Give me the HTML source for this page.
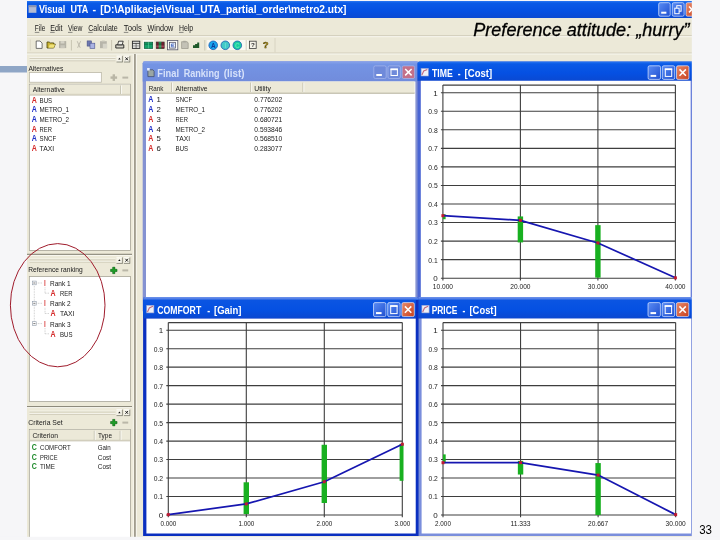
<!DOCTYPE html>
<html><head><meta charset="utf-8"><title>Visual UTA</title>
<style>
html,body{margin:0;padding:0;background:#f6f6f8;overflow:hidden}
svg{display:block;font-family:"Liberation Sans",sans-serif;filter:blur(0.35px)}
text{white-space:pre}
</style></head><body>
<svg width="720" height="540" viewBox="0 0 720 540">
<defs>
<linearGradient id="gA" x1="0" y1="0" x2="0" y2="1"><stop offset="0" stop-color="#2a78f2"/><stop offset="0.12" stop-color="#0a5ae6"/><stop offset="0.6" stop-color="#0550e2"/><stop offset="1" stop-color="#0a49d2"/></linearGradient>
<linearGradient id="gA2" x1="0" y1="0" x2="0" y2="1"><stop offset="0" stop-color="#6f93ea"/><stop offset="0.09" stop-color="#4f7ce6"/><stop offset="0.15" stop-color="#0b55e2"/><stop offset="0.6" stop-color="#0550e2"/><stop offset="1" stop-color="#0a47d0"/></linearGradient>
<linearGradient id="gI" x1="0" y1="0" x2="0" y2="1"><stop offset="0" stop-color="#8aa4ea"/><stop offset="0.15" stop-color="#7494e4"/><stop offset="1" stop-color="#718cdc"/></linearGradient>
<linearGradient id="gB" x1="0" y1="0" x2="1" y2="1"><stop offset="0" stop-color="#5a8cf4"/><stop offset="1" stop-color="#1f4fd0"/></linearGradient>
<linearGradient id="gC" x1="0" y1="0" x2="1" y2="1"><stop offset="0" stop-color="#e88a6a"/><stop offset="1" stop-color="#c8401c"/></linearGradient>
</defs>
<rect x="0" y="0" width="720" height="540" fill="#f6f6f8" />
<rect x="0" y="66" width="27" height="6.5" fill="#8fa6c6" />
<rect x="27" y="1" width="665" height="536" fill="#ece9d8" />
<rect x="27" y="1" width="665" height="17" fill="url(#gA)" />
<rect x="28.6" y="5.4" width="7.8" height="7.4" fill="#b4bcd2" />
<rect x="28.6" y="5.4" width="7.8" height="1.8" fill="#8a93b0" />
<text y="13.4" font-size="10.5" fill="#fff" font-weight="bold" ><tspan x="39" textLength="26.2" lengthAdjust="spacingAndGlyphs">Visual</tspan> <tspan x="70.5" textLength="17.5" lengthAdjust="spacingAndGlyphs">UTA</tspan> <tspan x="92.6" textLength="3.6" lengthAdjust="spacingAndGlyphs">-</tspan> <tspan x="100.3" textLength="246.2" lengthAdjust="spacingAndGlyphs">[D:\Aplikacje\Visual_UTA_partial_order\metro2.utx]</tspan></text>
<rect x="658.7" y="2.7" width="11.5" height="13.5" rx="1.5" fill="url(#gB)" stroke="#dfe9ff" stroke-width="0.7"/>
<rect x="661.2" y="11.7" width="5.175" height="2" fill="#fff" />
<rect x="672.3" y="2.7" width="11.8" height="13.5" rx="1.5" fill="url(#gB)" stroke="#dfe9ff" stroke-width="0.7"/>
<rect x="676.8" y="5.7" width="4.3" height="5.5" fill="none" stroke="#fff" stroke-width="1"/>
<rect x="674.8" y="8.2" width="4.3" height="5.5" fill="#2a62e0" stroke="#fff" stroke-width="1"/>
<rect x="686" y="2.7" width="11.8" height="13.5" rx="1.5" fill="url(#gC)" stroke="#dfe9ff" stroke-width="0.7"/>
<path d="M689 6.55L694.8 12.35M694.8 6.55L689 12.35" stroke="#fff" stroke-width="1.5" fill="none"/>
<rect x="691.8" y="0" width="28.2" height="20" fill="#f6f6f8" />
<text x="34.8" y="31.1" font-size="8.2" fill="#1a1a1a" font-weight="normal" font-style="normal" text-anchor="start" textLength="10.5" lengthAdjust="spacingAndGlyphs" >File</text>
<line x1="34.8" y1="32.4" x2="39.3" y2="32.4" stroke="#444" stroke-width="0.6" />
<text x="50.2" y="31.1" font-size="8.2" fill="#1a1a1a" font-weight="normal" font-style="normal" text-anchor="start" textLength="12.3" lengthAdjust="spacingAndGlyphs" >Edit</text>
<line x1="50.2" y1="32.4" x2="54.7" y2="32.4" stroke="#444" stroke-width="0.6" />
<text x="68" y="31.1" font-size="8.2" fill="#1a1a1a" font-weight="normal" font-style="normal" text-anchor="start" textLength="14.5" lengthAdjust="spacingAndGlyphs" >View</text>
<line x1="68" y1="32.4" x2="72.5" y2="32.4" stroke="#444" stroke-width="0.6" />
<text x="88.2" y="31.1" font-size="8.2" fill="#1a1a1a" font-weight="normal" font-style="normal" text-anchor="start" textLength="29.6" lengthAdjust="spacingAndGlyphs" >Calculate</text>
<line x1="88.2" y1="32.4" x2="92.7" y2="32.4" stroke="#444" stroke-width="0.6" />
<text x="123.8" y="31.1" font-size="8.2" fill="#1a1a1a" font-weight="normal" font-style="normal" text-anchor="start" textLength="18" lengthAdjust="spacingAndGlyphs" >Tools</text>
<line x1="123.8" y1="32.4" x2="128.3" y2="32.4" stroke="#444" stroke-width="0.6" />
<text x="147.5" y="31.1" font-size="8.2" fill="#1a1a1a" font-weight="normal" font-style="normal" text-anchor="start" textLength="25.8" lengthAdjust="spacingAndGlyphs" >Window</text>
<line x1="147.5" y1="32.4" x2="152" y2="32.4" stroke="#444" stroke-width="0.6" />
<text x="179" y="31.1" font-size="8.2" fill="#1a1a1a" font-weight="normal" font-style="normal" text-anchor="start" textLength="14.2" lengthAdjust="spacingAndGlyphs" >Help</text>
<line x1="179" y1="32.4" x2="183.5" y2="32.4" stroke="#444" stroke-width="0.6" />
<line x1="27" y1="35.8" x2="692" y2="35.8" stroke="#c8c4b0" stroke-width="0.9" />
<line x1="27" y1="36.7" x2="692" y2="36.7" stroke="#fbfaf4" stroke-width="0.9" />
<line x1="27" y1="53.1" x2="692" y2="53.1" stroke="#c8c4b0" stroke-width="0.9" />
<line x1="27" y1="54" x2="692" y2="54" stroke="#fbfaf4" stroke-width="0.9" />
<text x="473.2" y="35.9" font-size="18.8" fill="#000" font-weight="normal" font-style="italic" text-anchor="start" textLength="216.3" lengthAdjust="spacingAndGlyphs" stroke="#000" stroke-width="0.3">Preference attitude: „hurry”</text>
<line x1="30.3" y1="39.5" x2="30.3" y2="50.5" stroke="#dcd8c6" stroke-width="1" />
<path d="M36.2 41h3.8l2.1 2.1v5.3h-5.9z" fill="#fff" stroke="#3a3a3a" stroke-width="0.7"/>
<path d="M47 48v-6h2.2l0.9 0.9h3.6v1.2h1.6l-1.6 3.9z" fill="#c9b230" stroke="#4a4208" stroke-width="0.8"/>
<path d="M48.4 47.8l1.3-3.2h5.4l-1.4 3.2z" fill="#efe27a"/>
<rect x="59" y="41.1" width="7.2" height="7" fill="#b4b2a6" />
<rect x="60.6" y="41.1" width="3.8" height="2.4" fill="#d6d4c8" />
<rect x="60.4" y="45.2" width="4.4" height="2.9" fill="#c9c7bb" />
<line x1="71.4" y1="40" x2="71.4" y2="50.5" stroke="#c9c5b2" stroke-width="1" />
<path d="M77.2 41.2l3 6.6M80.6 41.2l-3 6.6" stroke="#b9b6a8" stroke-width="0.9" fill="none"/>
<rect x="87.1" y="40.9" width="4.4" height="5.2" fill="#6d78b0" stroke="#3d467c" stroke-width="0.5"/>
<rect x="90" y="43.2" width="4.8" height="5.2" fill="#a9b2e2" stroke="#4a5390" stroke-width="0.6"/>
<rect x="100" y="41.2" width="6.8" height="7" fill="#b7b5aa" />
<rect x="102.8" y="43.7" width="4.4" height="4.6" fill="#d6d4c9" />
<rect x="101.8" y="40.6" width="3" height="1.4" fill="#c6c4b8" />
<line x1="111.6" y1="40" x2="111.6" y2="50.5" stroke="#c9c5b2" stroke-width="1" />
<path d="M115.8 44.8h8v3.2h-8z" fill="#d6d4c8" stroke="#1e1e1e" stroke-width="0.9"/>
<path d="M117.6 44.8l1-3.6h4.6l-1 3.6z" fill="#efefe8" stroke="#1e1e1e" stroke-width="0.8"/>
<line x1="128.5" y1="40" x2="128.5" y2="50.5" stroke="#c9c5b2" stroke-width="1" />
<rect x="132.4" y="41.2" width="7.4" height="7.2" fill="#e6e6e2" stroke="#2a2a2a" stroke-width="0.9"/>
<line x1="132.4" y1="43.4" x2="139.8" y2="43.4" stroke="#2a2a2a" stroke-width="0.8" />
<line x1="136.1" y1="43.4" x2="136.1" y2="48.4" stroke="#2a2a2a" stroke-width="0.6" />
<line x1="132.4" y1="45.9" x2="139.8" y2="45.9" stroke="#555" stroke-width="0.5" />
<rect x="142.9" y="40" width="11.2" height="10" fill="#fbfaf4" />
<rect x="144.3" y="42.2" width="8.4" height="6.2" fill="#12a06a" stroke="#0a5a3a" stroke-width="0.7"/>
<line x1="144.3" y1="44.2" x2="152.7" y2="44.2" stroke="#0a5a3a" stroke-width="0.6" />
<line x1="148.5" y1="42.2" x2="148.5" y2="48.4" stroke="#5fd0a0" stroke-width="0.6" />
<rect x="156.2" y="42" width="8" height="6.6" fill="#8a1c34" stroke="#2a2a2a" stroke-width="0.6"/>
<rect x="158.6" y="42" width="2.8" height="6.6" fill="#1f8f50" />
<line x1="156.2" y1="44" x2="164.2" y2="44" stroke="#2a2a2a" stroke-width="0.6" />
<line x1="156.2" y1="46.2" x2="164.2" y2="46.2" stroke="#c8b8c0" stroke-width="0.4" />
<rect x="167.4" y="40.5" width="10.4" height="9.3" fill="#fdfcf8" stroke="#55556a" stroke-width="0.8"/>
<rect x="169.6" y="42.3" width="6" height="5.8" fill="#f4f6fc" stroke="#44465a" stroke-width="0.7"/>
<path d="M174.4 44h-3v2.8h3M171.4 45.4h2.4" stroke="#2a50b8" stroke-width="0.7" fill="none"/>
<path d="M181.6 41.7h5.6l1 1.4v5.4h-6.6z" fill="#c4c2b6" stroke="#8d8b80" stroke-width="0.6"/>
<rect x="183.2" y="40.8" width="2.6" height="1.5" fill="#a9a79c" />
<path d="M193 47.9v-2.7h2.1v-1.3h2.1v-1.3h2v5.3z" fill="#1f5a2a"/>
<line x1="204.8" y1="40" x2="204.8" y2="50.5" stroke="#c9c5b2" stroke-width="1" />
<rect x="207.2" y="40" width="41.4" height="10" fill="#f9f8f1" />
<circle cx="213.2" cy="45.3" r="4.3" fill="#1aa6ee" stroke="#1a58b0" stroke-width="0.8"/>
<text x="213.2" y="47.6" font-size="6.4" fill="#0d3a98" font-weight="bold" font-style="normal" text-anchor="middle" >A</text>
<circle cx="225.3" cy="45.3" r="4.3" fill="#42c8c8" stroke="#1a58b0" stroke-width="0.8"/>
<text x="225.3" y="47.6" font-size="6.4" fill="#6adcd2" font-weight="bold" font-style="normal" text-anchor="middle" >I</text>
<circle cx="237.3" cy="45.3" r="4.3" fill="#18cea0" stroke="#1a58b0" stroke-width="0.8"/>
<text x="237.3" y="47.6" font-size="6.4" fill="#5ae2b8" font-weight="bold" font-style="normal" text-anchor="middle" >C</text>
<line x1="246.2" y1="40" x2="246.2" y2="50.5" stroke="#c9c5b2" stroke-width="0.8" />
<rect x="249.4" y="41.2" width="6.8" height="7.2" fill="#f6f4ea" stroke="#3c3c3c" stroke-width="0.8"/>
<text x="252.8" y="47.4" font-size="6.2" fill="#222" font-weight="bold" font-style="normal" text-anchor="middle" >?</text>
<text x="265.6" y="48.4" font-size="9.6" fill="#b89a18" font-weight="bold" font-style="normal" text-anchor="middle" stroke="#3a3000" stroke-width="0.35">?</text>
<line x1="275" y1="38" x2="275" y2="52.5" stroke="#d8d4c2" stroke-width="1" />
<line x1="133.4" y1="54" x2="133.4" y2="540" stroke="#f6f4ea" stroke-width="1.2" />
<rect x="134.2" y="54" width="1.6" height="486" fill="#8e8b7c" />
<line x1="136.3" y1="54" x2="136.3" y2="540" stroke="#fdfcf8" stroke-width="0.8" />
<line x1="29.5" y1="57.6" x2="115.5" y2="57.6" stroke="#fbfaf3" stroke-width="0.9" />
<line x1="29.5" y1="58.4" x2="115.5" y2="58.4" stroke="#c5c1ae" stroke-width="0.7" />
<line x1="29.5" y1="60" x2="115.5" y2="60" stroke="#fbfaf3" stroke-width="0.9" />
<line x1="29.5" y1="60.8" x2="115.5" y2="60.8" stroke="#c5c1ae" stroke-width="0.7" />
<rect x="116.5" y="55.9" width="5.8" height="6" fill="#f6f4ea" />
<line x1="116.5" y1="62" x2="122.5" y2="62" stroke="#7a786c" stroke-width="0.8" />
<line x1="122.4" y1="55.9" x2="122.4" y2="62.2" stroke="#7a786c" stroke-width="0.8" />
<line x1="116.5" y1="55.9" x2="122.3" y2="55.9" stroke="#fff" stroke-width="0.6" />
<rect x="123.9" y="55.9" width="5.8" height="6" fill="#f6f4ea" />
<line x1="123.9" y1="62" x2="129.9" y2="62" stroke="#7a786c" stroke-width="0.8" />
<line x1="129.8" y1="55.9" x2="129.8" y2="62.2" stroke="#7a786c" stroke-width="0.8" />
<line x1="123.9" y1="55.9" x2="129.7" y2="55.9" stroke="#fff" stroke-width="0.6" />
<path d="M118.2 59.6l1.2-1.8l1.2 1.8z" fill="#111"/>
<path d="M125.4 57.4l2.6 2.8M128 57.4l-2.6 2.8" stroke="#111" stroke-width="0.9"/>
<text x="28.4" y="70.7" font-size="7.9" fill="#1a1a1a" font-weight="normal" font-style="normal" text-anchor="start" textLength="35" lengthAdjust="spacingAndGlyphs" >Alternatives</text>
<rect x="29.5" y="72.6" width="71.8" height="9.6" fill="#fff" stroke="#b4b1a0" stroke-width="0.7"/>
<rect x="110.5" y="76.4" width="6.6" height="2.4" fill="#b9b6a6" />
<rect x="112.6" y="74.3" width="2.4" height="6.6" fill="#b9b6a6" />
<rect x="122.4" y="76.6" width="5.8" height="2" fill="#bab7a8" />
<rect x="29.3" y="84.2" width="101.1" height="166.2" fill="#fff" stroke="#9c9a8c" stroke-width="0.7"/>
<rect x="29.7" y="84.6" width="100.3" height="10.4" fill="#ece9d8" />
<line x1="29.7" y1="95" x2="130" y2="95" stroke="#bdb9a6" stroke-width="1" />
<line x1="29.7" y1="94.2" x2="130" y2="94.2" stroke="#d9d5c4" stroke-width="0.8" />
<line x1="120.5" y1="85.5" x2="120.5" y2="94" stroke="#b9b5a2" stroke-width="0.9" />
<line x1="121.3" y1="85.5" x2="121.3" y2="94" stroke="#fff" stroke-width="0.8" />
<text x="32.7" y="92.4" font-size="7.9" fill="#1a1a1a" font-weight="normal" font-style="normal" text-anchor="start" textLength="32" lengthAdjust="spacingAndGlyphs" >Alternative</text>
<text x="34.3" y="102.6" font-size="8.3" fill="#d42a2a" font-weight="bold" font-style="normal" text-anchor="middle" textLength="5.1" lengthAdjust="spacingAndGlyphs" >A</text>
<text x="39.6" y="102.6" font-size="7.8" fill="#1a1a1a" font-weight="normal" font-style="normal" text-anchor="start" textLength="12.5" lengthAdjust="spacingAndGlyphs" >BUS</text>
<text x="34.3" y="112.25" font-size="8.3" fill="#2030c8" font-weight="bold" font-style="normal" text-anchor="middle" textLength="5.1" lengthAdjust="spacingAndGlyphs" >A</text>
<text x="39.6" y="112.25" font-size="7.8" fill="#1a1a1a" font-weight="normal" font-style="normal" text-anchor="start" textLength="29.5" lengthAdjust="spacingAndGlyphs" >METRO_1</text>
<text x="34.3" y="121.9" font-size="8.3" fill="#2030c8" font-weight="bold" font-style="normal" text-anchor="middle" textLength="5.1" lengthAdjust="spacingAndGlyphs" >A</text>
<text x="39.6" y="121.9" font-size="7.8" fill="#1a1a1a" font-weight="normal" font-style="normal" text-anchor="start" textLength="29.5" lengthAdjust="spacingAndGlyphs" >METRO_2</text>
<text x="34.3" y="131.5" font-size="8.3" fill="#d42a2a" font-weight="bold" font-style="normal" text-anchor="middle" textLength="5.1" lengthAdjust="spacingAndGlyphs" >A</text>
<text x="39.6" y="131.5" font-size="7.8" fill="#1a1a1a" font-weight="normal" font-style="normal" text-anchor="start" textLength="12.3" lengthAdjust="spacingAndGlyphs" >RER</text>
<text x="34.3" y="141.15" font-size="8.3" fill="#2030c8" font-weight="bold" font-style="normal" text-anchor="middle" textLength="5.1" lengthAdjust="spacingAndGlyphs" >A</text>
<text x="39.6" y="141.15" font-size="7.8" fill="#1a1a1a" font-weight="normal" font-style="normal" text-anchor="start" textLength="16.5" lengthAdjust="spacingAndGlyphs" >SNCF</text>
<text x="34.3" y="150.8" font-size="8.3" fill="#d42a2a" font-weight="bold" font-style="normal" text-anchor="middle" textLength="5.1" lengthAdjust="spacingAndGlyphs" >A</text>
<text x="39.6" y="150.8" font-size="7.8" fill="#1a1a1a" font-weight="normal" font-style="normal" text-anchor="start" textLength="14.5" lengthAdjust="spacingAndGlyphs" >TAXI</text>
<line x1="27" y1="254.4" x2="132" y2="254.4" stroke="#8e8b7c" stroke-width="1.2" />
<line x1="27" y1="255.4" x2="132" y2="255.4" stroke="#fdfcf7" stroke-width="0.8" />
<line x1="29.5" y1="259" x2="115.5" y2="259" stroke="#fbfaf3" stroke-width="0.9" />
<line x1="29.5" y1="259.8" x2="115.5" y2="259.8" stroke="#c5c1ae" stroke-width="0.7" />
<line x1="29.5" y1="261.4" x2="115.5" y2="261.4" stroke="#fbfaf3" stroke-width="0.9" />
<line x1="29.5" y1="262.2" x2="115.5" y2="262.2" stroke="#c5c1ae" stroke-width="0.7" />
<rect x="116.5" y="257.3" width="5.8" height="6" fill="#f6f4ea" />
<line x1="116.5" y1="263.4" x2="122.5" y2="263.4" stroke="#7a786c" stroke-width="0.8" />
<line x1="122.4" y1="257.3" x2="122.4" y2="263.6" stroke="#7a786c" stroke-width="0.8" />
<line x1="116.5" y1="257.3" x2="122.3" y2="257.3" stroke="#fff" stroke-width="0.6" />
<rect x="123.9" y="257.3" width="5.8" height="6" fill="#f6f4ea" />
<line x1="123.9" y1="263.4" x2="129.9" y2="263.4" stroke="#7a786c" stroke-width="0.8" />
<line x1="129.8" y1="257.3" x2="129.8" y2="263.6" stroke="#7a786c" stroke-width="0.8" />
<line x1="123.9" y1="257.3" x2="129.7" y2="257.3" stroke="#fff" stroke-width="0.6" />
<path d="M118.2 261l1.2-1.8l1.2 1.8z" fill="#111"/>
<path d="M125.4 258.8l2.6 2.8M128 258.8l-2.6 2.8" stroke="#111" stroke-width="0.9"/>
<text x="28.2" y="272.2" font-size="7.9" fill="#1a1a1a" font-weight="normal" font-style="normal" text-anchor="start" textLength="54.5" lengthAdjust="spacingAndGlyphs" >Reference ranking</text>
<rect x="110.5" y="269.2" width="6.6" height="2.4" fill="#1f9e28" />
<rect x="112.6" y="267.1" width="2.4" height="6.6" fill="#1f9e28" />
<path d="M110.6 269.3h2.1v-2.1h2.2v2.1h2.1v2.2h-2.1v2.1h-2.2v-2.1h-2.1z" fill="none" stroke="#0d5c14" stroke-width="0.5"/>
<rect x="122.4" y="269.4" width="5.8" height="2" fill="#bab7a8" />
<rect x="29.3" y="276.6" width="101.1" height="125" fill="#fff" stroke="#9c9a8c" stroke-width="0.7"/>
<line x1="34.3" y1="286" x2="34.3" y2="323.6" stroke="#b5b5b5" stroke-width="0.7" stroke-dasharray="0.8 0.8"/>
<rect x="32.5" y="281.1" width="3.7" height="3.7" fill="#fff" stroke="#8f9aa8" stroke-width="0.6"/>
<line x1="33.3" y1="283" x2="35.4" y2="283" stroke="#222" stroke-width="0.6" />
<line x1="36.4" y1="283" x2="42" y2="283" stroke="#b5b5b5" stroke-width="0.7" stroke-dasharray="0.8 0.8"/>
<text x="45" y="286" font-size="8.2" fill="#d42a2a" font-weight="normal" font-style="normal" text-anchor="middle" >I</text>
<text x="50" y="286" font-size="7.9" fill="#1a1a1a" font-weight="normal" font-style="normal" text-anchor="start" textLength="20.6" lengthAdjust="spacingAndGlyphs" >Rank 1</text>
<line x1="45" y1="287.5" x2="45" y2="293.2" stroke="#b5b5b5" stroke-width="0.7" stroke-dasharray="0.8 0.8"/>
<line x1="45" y1="293.2" x2="49.5" y2="293.2" stroke="#b5b5b5" stroke-width="0.7" stroke-dasharray="0.8 0.8"/>
<text x="53" y="296.1" font-size="8.3" fill="#d42a2a" font-weight="bold" font-style="normal" text-anchor="middle" textLength="5.1" lengthAdjust="spacingAndGlyphs" >A</text>
<text x="60" y="296.1" font-size="7.8" fill="#1a1a1a" font-weight="normal" font-style="normal" text-anchor="start" textLength="12.5" lengthAdjust="spacingAndGlyphs" >RER</text>
<rect x="32.5" y="301.4" width="3.7" height="3.7" fill="#fff" stroke="#8f9aa8" stroke-width="0.6"/>
<line x1="33.3" y1="303.3" x2="35.4" y2="303.3" stroke="#222" stroke-width="0.6" />
<line x1="36.4" y1="303.3" x2="42" y2="303.3" stroke="#b5b5b5" stroke-width="0.7" stroke-dasharray="0.8 0.8"/>
<text x="45" y="306.3" font-size="8.2" fill="#d42a2a" font-weight="normal" font-style="normal" text-anchor="middle" >I</text>
<text x="50" y="306.3" font-size="7.9" fill="#1a1a1a" font-weight="normal" font-style="normal" text-anchor="start" textLength="20.6" lengthAdjust="spacingAndGlyphs" >Rank 2</text>
<line x1="45" y1="307.8" x2="45" y2="313.5" stroke="#b5b5b5" stroke-width="0.7" stroke-dasharray="0.8 0.8"/>
<line x1="45" y1="313.5" x2="49.5" y2="313.5" stroke="#b5b5b5" stroke-width="0.7" stroke-dasharray="0.8 0.8"/>
<text x="53" y="316.4" font-size="8.3" fill="#d42a2a" font-weight="bold" font-style="normal" text-anchor="middle" textLength="5.1" lengthAdjust="spacingAndGlyphs" >A</text>
<text x="60" y="316.4" font-size="7.8" fill="#1a1a1a" font-weight="normal" font-style="normal" text-anchor="start" textLength="14.5" lengthAdjust="spacingAndGlyphs" >TAXI</text>
<rect x="32.5" y="321.7" width="3.7" height="3.7" fill="#fff" stroke="#8f9aa8" stroke-width="0.6"/>
<line x1="33.3" y1="323.6" x2="35.4" y2="323.6" stroke="#222" stroke-width="0.6" />
<line x1="36.4" y1="323.6" x2="42" y2="323.6" stroke="#b5b5b5" stroke-width="0.7" stroke-dasharray="0.8 0.8"/>
<text x="45" y="326.6" font-size="8.2" fill="#d42a2a" font-weight="normal" font-style="normal" text-anchor="middle" >I</text>
<text x="50" y="326.6" font-size="7.9" fill="#1a1a1a" font-weight="normal" font-style="normal" text-anchor="start" textLength="20.6" lengthAdjust="spacingAndGlyphs" >Rank 3</text>
<line x1="45" y1="328.1" x2="45" y2="333.8" stroke="#b5b5b5" stroke-width="0.7" stroke-dasharray="0.8 0.8"/>
<line x1="45" y1="333.8" x2="49.5" y2="333.8" stroke="#b5b5b5" stroke-width="0.7" stroke-dasharray="0.8 0.8"/>
<text x="53" y="336.7" font-size="8.3" fill="#d42a2a" font-weight="bold" font-style="normal" text-anchor="middle" textLength="5.1" lengthAdjust="spacingAndGlyphs" >A</text>
<text x="60" y="336.7" font-size="7.8" fill="#1a1a1a" font-weight="normal" font-style="normal" text-anchor="start" textLength="12.5" lengthAdjust="spacingAndGlyphs" >BUS</text>
<ellipse cx="57.7" cy="305.2" rx="47.3" ry="61.6" fill="none" stroke="#a01c2c" stroke-width="1"/>
<line x1="27" y1="406.6" x2="132" y2="406.6" stroke="#8e8b7c" stroke-width="1.2" />
<line x1="27" y1="407.6" x2="132" y2="407.6" stroke="#fdfcf7" stroke-width="0.8" />
<line x1="29.5" y1="411.2" x2="115.5" y2="411.2" stroke="#fbfaf3" stroke-width="0.9" />
<line x1="29.5" y1="412" x2="115.5" y2="412" stroke="#c5c1ae" stroke-width="0.7" />
<line x1="29.5" y1="413.6" x2="115.5" y2="413.6" stroke="#fbfaf3" stroke-width="0.9" />
<line x1="29.5" y1="414.4" x2="115.5" y2="414.4" stroke="#c5c1ae" stroke-width="0.7" />
<rect x="116.5" y="409.5" width="5.8" height="6" fill="#f6f4ea" />
<line x1="116.5" y1="415.6" x2="122.5" y2="415.6" stroke="#7a786c" stroke-width="0.8" />
<line x1="122.4" y1="409.5" x2="122.4" y2="415.8" stroke="#7a786c" stroke-width="0.8" />
<line x1="116.5" y1="409.5" x2="122.3" y2="409.5" stroke="#fff" stroke-width="0.6" />
<rect x="123.9" y="409.5" width="5.8" height="6" fill="#f6f4ea" />
<line x1="123.9" y1="415.6" x2="129.9" y2="415.6" stroke="#7a786c" stroke-width="0.8" />
<line x1="129.8" y1="409.5" x2="129.8" y2="415.8" stroke="#7a786c" stroke-width="0.8" />
<line x1="123.9" y1="409.5" x2="129.7" y2="409.5" stroke="#fff" stroke-width="0.6" />
<path d="M118.2 413.2l1.2-1.8l1.2 1.8z" fill="#111"/>
<path d="M125.4 411l2.6 2.8M128 411l-2.6 2.8" stroke="#111" stroke-width="0.9"/>
<text x="28.3" y="425.3" font-size="7.9" fill="#1a1a1a" font-weight="normal" font-style="normal" text-anchor="start" textLength="34.4" lengthAdjust="spacingAndGlyphs" >Criteria Set</text>
<rect x="110.5" y="421.4" width="6.6" height="2.4" fill="#1f9e28" />
<rect x="112.6" y="419.3" width="2.4" height="6.6" fill="#1f9e28" />
<path d="M110.6 421.5h2.1v-2.1h2.2v2.1h2.1v2.2h-2.1v2.1h-2.2v-2.1h-2.1z" fill="none" stroke="#0d5c14" stroke-width="0.5"/>
<rect x="122.4" y="421.6" width="5.8" height="2" fill="#bab7a8" />
<rect x="29.3" y="429.4" width="101.1" height="112" fill="#fff" stroke="#9c9a8c" stroke-width="0.7"/>
<rect x="29.7" y="429.8" width="100.3" height="10.8" fill="#ece9d8" />
<line x1="29.7" y1="440.8" x2="130" y2="440.8" stroke="#bdb9a6" stroke-width="1" />
<line x1="29.7" y1="440" x2="130" y2="440" stroke="#d9d5c4" stroke-width="0.8" />
<line x1="94.3" y1="430.8" x2="94.3" y2="440" stroke="#b9b5a2" stroke-width="0.9" />
<line x1="95.1" y1="430.8" x2="95.1" y2="440" stroke="#fff" stroke-width="0.8" />
<line x1="120.2" y1="430.8" x2="120.2" y2="440" stroke="#b9b5a2" stroke-width="0.9" />
<line x1="121" y1="430.8" x2="121" y2="440" stroke="#fff" stroke-width="0.8" />
<text x="32.4" y="438.4" font-size="7.9" fill="#1a1a1a" font-weight="normal" font-style="normal" text-anchor="start" textLength="25.6" lengthAdjust="spacingAndGlyphs" >Criterion</text>
<text x="98" y="438.4" font-size="7.9" fill="#1a1a1a" font-weight="normal" font-style="normal" text-anchor="start" textLength="14" lengthAdjust="spacingAndGlyphs" >Type</text>
<text x="34.4" y="449.9" font-size="8.3" fill="#1d8a2a" font-weight="bold" font-style="normal" text-anchor="middle" textLength="5.1" lengthAdjust="spacingAndGlyphs" >C</text>
<text x="40" y="449.9" font-size="7.8" fill="#1a1a1a" font-weight="normal" font-style="normal" text-anchor="start" textLength="30.6" lengthAdjust="spacingAndGlyphs" >COMFORT</text>
<text x="97.8" y="449.9" font-size="7.8" fill="#1a1a1a" font-weight="normal" font-style="normal" text-anchor="start" textLength="13" lengthAdjust="spacingAndGlyphs" >Gain</text>
<text x="34.4" y="459.5" font-size="8.3" fill="#1d8a2a" font-weight="bold" font-style="normal" text-anchor="middle" textLength="5.1" lengthAdjust="spacingAndGlyphs" >C</text>
<text x="40" y="459.5" font-size="7.8" fill="#1a1a1a" font-weight="normal" font-style="normal" text-anchor="start" textLength="17.6" lengthAdjust="spacingAndGlyphs" >PRICE</text>
<text x="97.8" y="459.5" font-size="7.8" fill="#1a1a1a" font-weight="normal" font-style="normal" text-anchor="start" textLength="13.2" lengthAdjust="spacingAndGlyphs" >Cost</text>
<text x="34.4" y="469.1" font-size="8.3" fill="#1d8a2a" font-weight="bold" font-style="normal" text-anchor="middle" textLength="5.1" lengthAdjust="spacingAndGlyphs" >C</text>
<text x="40" y="469.1" font-size="7.8" fill="#1a1a1a" font-weight="normal" font-style="normal" text-anchor="start" textLength="15" lengthAdjust="spacingAndGlyphs" >TIME</text>
<text x="97.8" y="469.1" font-size="7.8" fill="#1a1a1a" font-weight="normal" font-style="normal" text-anchor="start" textLength="13.2" lengthAdjust="spacingAndGlyphs" >Cost</text>
<path d="M142.7 311.3V63.3q0-2 2-2H416.7q2 0 2 2V311.3z" fill="#8492d2"/>
<path d="M142.7 81.5V63.3q0-2 2-2H416.7q2 0 2 2V81.5z" fill="url(#gI)"/>
<rect x="146" y="81.5" width="269.4" height="227.3" fill="#fff" />
<rect x="402.2" y="65.9" width="12.4" height="12.6" rx="1.5" fill="#c4708a" stroke="#a9b9ec" stroke-width="0.7"/>
<path d="M405.2 69L411.6 75.4M411.6 69L405.2 75.4" stroke="#fff" stroke-width="1.5" fill="none"/>
<rect x="388" y="65.9" width="12.4" height="12.6" rx="1.5" fill="#6f8ada" stroke="#a9b9ec" stroke-width="0.7"/>
<rect x="391" y="69.1" width="6.4" height="6.4" fill="none" stroke="#fff" stroke-width="1"/>
<rect x="390.5" y="68.6" width="7.4" height="1.6" fill="#fff" />
<rect x="373.8" y="65.9" width="12.4" height="12.6" rx="1.5" fill="#6f8ada" stroke="#a9b9ec" stroke-width="0.7"/>
<rect x="376.3" y="74" width="5.58" height="2" fill="#fff" />
<path d="M147.9 69.8h5l1.2 1.4v5.4h-6.2z" fill="#9aa6a4" stroke="#3a4668" stroke-width="0.7"/>
<rect x="147.1" y="68" width="2.6" height="2.6" fill="#e4ecff" />
<text y="76.6" font-size="10.4" fill="#d6e1fa" font-weight="bold" ><tspan x="157.3" textLength="21.7" lengthAdjust="spacingAndGlyphs">Final</tspan> <tspan x="183.7" textLength="35.8" lengthAdjust="spacingAndGlyphs">Ranking</tspan> <tspan x="223.7" textLength="20.8" lengthAdjust="spacingAndGlyphs">(list)</tspan></text>
<rect x="146" y="81.5" width="268.6" height="11.7" fill="#ece9d8" />
<line x1="146" y1="93.3" x2="414.6" y2="93.3" stroke="#bdb9a6" stroke-width="1" />
<line x1="146" y1="92.5" x2="414.6" y2="92.5" stroke="#d9d5c4" stroke-width="0.8" />
<line x1="171.6" y1="82.6" x2="171.6" y2="92" stroke="#b9b5a2" stroke-width="0.9" />
<line x1="172.4" y1="82.6" x2="172.4" y2="92" stroke="#fff" stroke-width="0.8" />
<line x1="250.8" y1="82.6" x2="250.8" y2="92" stroke="#b9b5a2" stroke-width="0.9" />
<line x1="251.6" y1="82.6" x2="251.6" y2="92" stroke="#fff" stroke-width="0.8" />
<line x1="303" y1="82.6" x2="303" y2="92" stroke="#b9b5a2" stroke-width="0.9" />
<line x1="303.8" y1="82.6" x2="303.8" y2="92" stroke="#fff" stroke-width="0.8" />
<text x="148.8" y="90.6" font-size="7.9" fill="#1a1a1a" font-weight="normal" font-style="normal" text-anchor="start" textLength="14.6" lengthAdjust="spacingAndGlyphs" >Rank</text>
<text x="175.6" y="90.6" font-size="7.9" fill="#1a1a1a" font-weight="normal" font-style="normal" text-anchor="start" textLength="32" lengthAdjust="spacingAndGlyphs" >Alternative</text>
<text x="254.3" y="90.6" font-size="7.9" fill="#1a1a1a" font-weight="normal" font-style="normal" text-anchor="start" textLength="16.6" lengthAdjust="spacingAndGlyphs" >Utility</text>
<text x="150.9" y="102.4" font-size="8.3" fill="#2030c8" font-weight="bold" font-style="normal" text-anchor="middle" textLength="5.1" lengthAdjust="spacingAndGlyphs" >A</text>
<text x="156.6" y="102.4" font-size="7.8" fill="#1a1a1a" font-weight="normal" font-style="normal" text-anchor="start" >1</text>
<text x="175.6" y="102.4" font-size="7.8" fill="#1a1a1a" font-weight="normal" font-style="normal" text-anchor="start" textLength="16.5" lengthAdjust="spacingAndGlyphs" >SNCF</text>
<text x="254.3" y="102.4" font-size="7.8" fill="#1a1a1a" font-weight="normal" font-style="normal" text-anchor="start" textLength="28" lengthAdjust="spacingAndGlyphs" >0.776202</text>
<text x="150.9" y="112.12" font-size="8.3" fill="#2030c8" font-weight="bold" font-style="normal" text-anchor="middle" textLength="5.1" lengthAdjust="spacingAndGlyphs" >A</text>
<text x="156.6" y="112.12" font-size="7.8" fill="#1a1a1a" font-weight="normal" font-style="normal" text-anchor="start" >2</text>
<text x="175.6" y="112.12" font-size="7.8" fill="#1a1a1a" font-weight="normal" font-style="normal" text-anchor="start" textLength="29.5" lengthAdjust="spacingAndGlyphs" >METRO_1</text>
<text x="254.3" y="112.12" font-size="7.8" fill="#1a1a1a" font-weight="normal" font-style="normal" text-anchor="start" textLength="28" lengthAdjust="spacingAndGlyphs" >0.776202</text>
<text x="150.9" y="121.84" font-size="8.3" fill="#d42a2a" font-weight="bold" font-style="normal" text-anchor="middle" textLength="5.1" lengthAdjust="spacingAndGlyphs" >A</text>
<text x="156.6" y="121.84" font-size="7.8" fill="#1a1a1a" font-weight="normal" font-style="normal" text-anchor="start" >3</text>
<text x="175.6" y="121.84" font-size="7.8" fill="#1a1a1a" font-weight="normal" font-style="normal" text-anchor="start" textLength="12.3" lengthAdjust="spacingAndGlyphs" >RER</text>
<text x="254.3" y="121.84" font-size="7.8" fill="#1a1a1a" font-weight="normal" font-style="normal" text-anchor="start" textLength="28" lengthAdjust="spacingAndGlyphs" >0.680721</text>
<text x="150.9" y="131.56" font-size="8.3" fill="#2030c8" font-weight="bold" font-style="normal" text-anchor="middle" textLength="5.1" lengthAdjust="spacingAndGlyphs" >A</text>
<text x="156.6" y="131.56" font-size="7.8" fill="#1a1a1a" font-weight="normal" font-style="normal" text-anchor="start" >4</text>
<text x="175.6" y="131.56" font-size="7.8" fill="#1a1a1a" font-weight="normal" font-style="normal" text-anchor="start" textLength="29.5" lengthAdjust="spacingAndGlyphs" >METRO_2</text>
<text x="254.3" y="131.56" font-size="7.8" fill="#1a1a1a" font-weight="normal" font-style="normal" text-anchor="start" textLength="28" lengthAdjust="spacingAndGlyphs" >0.593846</text>
<text x="150.9" y="141.28" font-size="8.3" fill="#d42a2a" font-weight="bold" font-style="normal" text-anchor="middle" textLength="5.1" lengthAdjust="spacingAndGlyphs" >A</text>
<text x="156.6" y="141.28" font-size="7.8" fill="#1a1a1a" font-weight="normal" font-style="normal" text-anchor="start" >5</text>
<text x="175.6" y="141.28" font-size="7.8" fill="#1a1a1a" font-weight="normal" font-style="normal" text-anchor="start" textLength="14.5" lengthAdjust="spacingAndGlyphs" >TAXI</text>
<text x="254.3" y="141.28" font-size="7.8" fill="#1a1a1a" font-weight="normal" font-style="normal" text-anchor="start" textLength="28" lengthAdjust="spacingAndGlyphs" >0.568510</text>
<text x="150.9" y="151" font-size="8.3" fill="#d42a2a" font-weight="bold" font-style="normal" text-anchor="middle" textLength="5.1" lengthAdjust="spacingAndGlyphs" >A</text>
<text x="156.6" y="151" font-size="7.8" fill="#1a1a1a" font-weight="normal" font-style="normal" text-anchor="start" >6</text>
<text x="175.6" y="151" font-size="7.8" fill="#1a1a1a" font-weight="normal" font-style="normal" text-anchor="start" textLength="12.5" lengthAdjust="spacingAndGlyphs" >BUS</text>
<text x="254.3" y="151" font-size="7.8" fill="#1a1a1a" font-weight="normal" font-style="normal" text-anchor="start" textLength="28" lengthAdjust="spacingAndGlyphs" >0.283077</text>
<path d="M417.5 311.6V63.6q0-2 2-2H692q2 0 2 2V311.6z" fill="#4a66d4"/>
<path d="M417.5 80.8V63.6q0-2 2-2H692q2 0 2 2V80.8z" fill="url(#gA)"/>
<rect x="420.8" y="80.8" width="269.9" height="228.3" fill="#fff" />
<rect x="676.5" y="65.8" width="12.4" height="13.6" rx="1.5" fill="url(#gC)" stroke="#dfe9ff" stroke-width="0.7"/>
<path d="M679.5 69.4L685.9 75.8M685.9 69.4L679.5 75.8" stroke="#fff" stroke-width="1.5" fill="none"/>
<rect x="662.3" y="65.8" width="12.4" height="13.6" rx="1.5" fill="url(#gB)" stroke="#dfe9ff" stroke-width="0.7"/>
<rect x="665.3" y="69" width="6.4" height="7.4" fill="none" stroke="#fff" stroke-width="1"/>
<rect x="664.8" y="68.5" width="7.4" height="1.6" fill="#fff" />
<rect x="648.1" y="65.8" width="12.4" height="13.6" rx="1.5" fill="url(#gB)" stroke="#dfe9ff" stroke-width="0.7"/>
<rect x="650.6" y="74.9" width="5.58" height="2" fill="#fff" />
<rect x="421.1" y="68.4" width="7.2" height="7.6" fill="#eef0f8" stroke="#9aa2d0" stroke-width="0.6"/>
<path d="M421.9 75l1.8-4l3.6-1.6" fill="none" stroke="#c06a80" stroke-width="1.1"/>
<text y="76.6" font-size="10.4" fill="#fff" font-weight="bold" ><tspan x="432" textLength="20.8" lengthAdjust="spacingAndGlyphs">TIME</tspan> <tspan x="457.7" textLength="2.8" lengthAdjust="spacingAndGlyphs">-</tspan> <tspan x="464.6" textLength="27.5" lengthAdjust="spacingAndGlyphs">[Cost]</tspan></text>
<line x1="440.9" y1="278.2" x2="675.4" y2="278.2" stroke="#3e3e3e" stroke-width="1.1" />
<text x="437.7" y="281.1" font-size="8" fill="#222" font-weight="normal" font-style="normal" text-anchor="end" >0</text>
<line x1="440.9" y1="259.65" x2="675.4" y2="259.65" stroke="#3e3e3e" stroke-width="1.1" />
<text x="437.7" y="262.55" font-size="8" fill="#222" font-weight="normal" font-style="normal" text-anchor="end" textLength="9.4" lengthAdjust="spacingAndGlyphs" >0.1</text>
<line x1="440.9" y1="241.1" x2="675.4" y2="241.1" stroke="#3e3e3e" stroke-width="1.1" />
<text x="437.7" y="244" font-size="8" fill="#222" font-weight="normal" font-style="normal" text-anchor="end" textLength="9.4" lengthAdjust="spacingAndGlyphs" >0.2</text>
<line x1="440.9" y1="222.55" x2="675.4" y2="222.55" stroke="#3e3e3e" stroke-width="1.1" />
<text x="437.7" y="225.45" font-size="8" fill="#222" font-weight="normal" font-style="normal" text-anchor="end" textLength="9.4" lengthAdjust="spacingAndGlyphs" >0.3</text>
<line x1="440.9" y1="204" x2="675.4" y2="204" stroke="#3e3e3e" stroke-width="1.1" />
<text x="437.7" y="206.9" font-size="8" fill="#222" font-weight="normal" font-style="normal" text-anchor="end" textLength="9.4" lengthAdjust="spacingAndGlyphs" >0.4</text>
<line x1="440.9" y1="185.45" x2="675.4" y2="185.45" stroke="#3e3e3e" stroke-width="1.1" />
<text x="437.7" y="188.35" font-size="8" fill="#222" font-weight="normal" font-style="normal" text-anchor="end" textLength="9.4" lengthAdjust="spacingAndGlyphs" >0.5</text>
<line x1="440.9" y1="166.9" x2="675.4" y2="166.9" stroke="#3e3e3e" stroke-width="1.1" />
<text x="437.7" y="169.8" font-size="8" fill="#222" font-weight="normal" font-style="normal" text-anchor="end" textLength="9.4" lengthAdjust="spacingAndGlyphs" >0.6</text>
<line x1="440.9" y1="148.35" x2="675.4" y2="148.35" stroke="#3e3e3e" stroke-width="1.1" />
<text x="437.7" y="151.25" font-size="8" fill="#222" font-weight="normal" font-style="normal" text-anchor="end" textLength="9.4" lengthAdjust="spacingAndGlyphs" >0.7</text>
<line x1="440.9" y1="129.8" x2="675.4" y2="129.8" stroke="#3e3e3e" stroke-width="1.1" />
<text x="437.7" y="132.7" font-size="8" fill="#222" font-weight="normal" font-style="normal" text-anchor="end" textLength="9.4" lengthAdjust="spacingAndGlyphs" >0.8</text>
<line x1="440.9" y1="111.25" x2="675.4" y2="111.25" stroke="#3e3e3e" stroke-width="1.1" />
<text x="437.7" y="114.15" font-size="8" fill="#222" font-weight="normal" font-style="normal" text-anchor="end" textLength="9.4" lengthAdjust="spacingAndGlyphs" >0.9</text>
<line x1="440.9" y1="92.7" x2="675.4" y2="92.7" stroke="#3e3e3e" stroke-width="1.1" />
<text x="437.7" y="95.6" font-size="8" fill="#222" font-weight="normal" font-style="normal" text-anchor="end" >1</text>
<line x1="442.9" y1="85.1" x2="442.9" y2="280.4" stroke="#3e3e3e" stroke-width="1.1" />
<text x="442.9" y="289" font-size="7.9" fill="#222" font-weight="normal" font-style="normal" text-anchor="middle" textLength="20.2" lengthAdjust="spacingAndGlyphs" >10.000</text>
<line x1="520.4" y1="85.1" x2="520.4" y2="280.4" stroke="#3e3e3e" stroke-width="1.1" />
<text x="520.4" y="289" font-size="7.9" fill="#222" font-weight="normal" font-style="normal" text-anchor="middle" textLength="20.2" lengthAdjust="spacingAndGlyphs" >20.000</text>
<line x1="597.9" y1="85.1" x2="597.9" y2="280.4" stroke="#3e3e3e" stroke-width="1.1" />
<text x="597.9" y="289" font-size="7.9" fill="#222" font-weight="normal" font-style="normal" text-anchor="middle" textLength="20.2" lengthAdjust="spacingAndGlyphs" >30.000</text>
<line x1="675.4" y1="85.1" x2="675.4" y2="280.4" stroke="#3e3e3e" stroke-width="1.1" />
<text x="675.4" y="289" font-size="7.9" fill="#222" font-weight="normal" font-style="normal" text-anchor="middle" textLength="20.2" lengthAdjust="spacingAndGlyphs" >40.000</text>
<line x1="442.9" y1="85.1" x2="675.4" y2="85.1" stroke="#3e3e3e" stroke-width="1.1" />
<rect x="442.9" y="214.202" width="2.7" height="5.0085" fill="#18b020" />
<rect x="517.7" y="216.428" width="5.4" height="25.97" fill="#18b020" />
<rect x="595.2" y="225.147" width="5.4" height="52.4965" fill="#18b020" />
<path d="M442.9 215.686 L520.4 220.324 L597.9 242.955 L675.4 277.829" fill="none" stroke="#1616b0" stroke-width="1.7" stroke-linejoin="round"/>
<rect x="441.4" y="214.186" width="3" height="3" fill="#c01a30" />
<rect x="518.9" y="218.824" width="3" height="3" fill="#c01a30" />
<rect x="596.4" y="241.455" width="3" height="3" fill="#c01a30" />
<rect x="673.9" y="276.329" width="3" height="3" fill="#c01a30" />
<path d="M418.3 536V299q0-2 2-2H692.3q2 0 2 2V536z" fill="#7a8edc"/>
<path d="M418.3 318.6V299q0-2 2-2H692.3q2 0 2 2V318.6z" fill="url(#gA2)"/>
<rect x="421.6" y="318.6" width="269.4" height="214.9" fill="#fff" />
<rect x="676.4" y="302.6" width="12.4" height="14" rx="1.5" fill="url(#gC)" stroke="#dfe9ff" stroke-width="0.7"/>
<path d="M679.4 306.4L685.8 312.8M685.8 306.4L679.4 312.8" stroke="#fff" stroke-width="1.5" fill="none"/>
<rect x="662.2" y="302.6" width="12.4" height="14" rx="1.5" fill="url(#gB)" stroke="#dfe9ff" stroke-width="0.7"/>
<rect x="665.2" y="305.8" width="6.4" height="7.8" fill="none" stroke="#fff" stroke-width="1"/>
<rect x="664.7" y="305.3" width="7.4" height="1.6" fill="#fff" />
<rect x="648" y="302.6" width="12.4" height="14" rx="1.5" fill="url(#gB)" stroke="#dfe9ff" stroke-width="0.7"/>
<rect x="650.5" y="312.1" width="5.58" height="2" fill="#fff" />
<rect x="421.9" y="305.3" width="7.2" height="7.6" fill="#eef0f8" stroke="#9aa2d0" stroke-width="0.6"/>
<path d="M422.7 311.9l1.8-4l3.6-1.6" fill="none" stroke="#c06a80" stroke-width="1.1"/>
<text y="313.5" font-size="10.4" fill="#fff" font-weight="bold" ><tspan x="431.7" textLength="25.7" lengthAdjust="spacingAndGlyphs">PRICE</tspan> <tspan x="462.5" textLength="2.8" lengthAdjust="spacingAndGlyphs">-</tspan> <tspan x="469.5" textLength="27.1" lengthAdjust="spacingAndGlyphs">[Cost]</tspan></text>
<line x1="441" y1="515" x2="675.65" y2="515" stroke="#3e3e3e" stroke-width="1.1" />
<text x="437.8" y="517.9" font-size="8" fill="#222" font-weight="normal" font-style="normal" text-anchor="end" >0</text>
<line x1="441" y1="496.52" x2="675.65" y2="496.52" stroke="#3e3e3e" stroke-width="1.1" />
<text x="437.8" y="499.42" font-size="8" fill="#222" font-weight="normal" font-style="normal" text-anchor="end" textLength="9.4" lengthAdjust="spacingAndGlyphs" >0.1</text>
<line x1="441" y1="478.04" x2="675.65" y2="478.04" stroke="#3e3e3e" stroke-width="1.1" />
<text x="437.8" y="480.94" font-size="8" fill="#222" font-weight="normal" font-style="normal" text-anchor="end" textLength="9.4" lengthAdjust="spacingAndGlyphs" >0.2</text>
<line x1="441" y1="459.56" x2="675.65" y2="459.56" stroke="#3e3e3e" stroke-width="1.1" />
<text x="437.8" y="462.46" font-size="8" fill="#222" font-weight="normal" font-style="normal" text-anchor="end" textLength="9.4" lengthAdjust="spacingAndGlyphs" >0.3</text>
<line x1="441" y1="441.08" x2="675.65" y2="441.08" stroke="#3e3e3e" stroke-width="1.1" />
<text x="437.8" y="443.98" font-size="8" fill="#222" font-weight="normal" font-style="normal" text-anchor="end" textLength="9.4" lengthAdjust="spacingAndGlyphs" >0.4</text>
<line x1="441" y1="422.6" x2="675.65" y2="422.6" stroke="#3e3e3e" stroke-width="1.1" />
<text x="437.8" y="425.5" font-size="8" fill="#222" font-weight="normal" font-style="normal" text-anchor="end" textLength="9.4" lengthAdjust="spacingAndGlyphs" >0.5</text>
<line x1="441" y1="404.12" x2="675.65" y2="404.12" stroke="#3e3e3e" stroke-width="1.1" />
<text x="437.8" y="407.02" font-size="8" fill="#222" font-weight="normal" font-style="normal" text-anchor="end" textLength="9.4" lengthAdjust="spacingAndGlyphs" >0.6</text>
<line x1="441" y1="385.64" x2="675.65" y2="385.64" stroke="#3e3e3e" stroke-width="1.1" />
<text x="437.8" y="388.54" font-size="8" fill="#222" font-weight="normal" font-style="normal" text-anchor="end" textLength="9.4" lengthAdjust="spacingAndGlyphs" >0.7</text>
<line x1="441" y1="367.16" x2="675.65" y2="367.16" stroke="#3e3e3e" stroke-width="1.1" />
<text x="437.8" y="370.06" font-size="8" fill="#222" font-weight="normal" font-style="normal" text-anchor="end" textLength="9.4" lengthAdjust="spacingAndGlyphs" >0.8</text>
<line x1="441" y1="348.68" x2="675.65" y2="348.68" stroke="#3e3e3e" stroke-width="1.1" />
<text x="437.8" y="351.58" font-size="8" fill="#222" font-weight="normal" font-style="normal" text-anchor="end" textLength="9.4" lengthAdjust="spacingAndGlyphs" >0.9</text>
<line x1="441" y1="330.2" x2="675.65" y2="330.2" stroke="#3e3e3e" stroke-width="1.1" />
<text x="437.8" y="333.1" font-size="8" fill="#222" font-weight="normal" font-style="normal" text-anchor="end" >1</text>
<line x1="443" y1="322.6" x2="443" y2="517.2" stroke="#3e3e3e" stroke-width="1.1" />
<text x="443" y="525.8" font-size="7.9" fill="#222" font-weight="normal" font-style="normal" text-anchor="middle" textLength="15.8" lengthAdjust="spacingAndGlyphs" >2.000</text>
<line x1="520.55" y1="322.6" x2="520.55" y2="517.2" stroke="#3e3e3e" stroke-width="1.1" />
<text x="520.55" y="525.8" font-size="7.9" fill="#222" font-weight="normal" font-style="normal" text-anchor="middle" textLength="20.2" lengthAdjust="spacingAndGlyphs" >11.333</text>
<line x1="598.1" y1="322.6" x2="598.1" y2="517.2" stroke="#3e3e3e" stroke-width="1.1" />
<text x="598.1" y="525.8" font-size="7.9" fill="#222" font-weight="normal" font-style="normal" text-anchor="middle" textLength="20.2" lengthAdjust="spacingAndGlyphs" >20.667</text>
<line x1="675.65" y1="322.6" x2="675.65" y2="517.2" stroke="#3e3e3e" stroke-width="1.1" />
<text x="675.65" y="525.8" font-size="7.9" fill="#222" font-weight="normal" font-style="normal" text-anchor="middle" textLength="20.2" lengthAdjust="spacingAndGlyphs" >30.000</text>
<line x1="443" y1="322.6" x2="675.65" y2="322.6" stroke="#3e3e3e" stroke-width="1.1" />
<rect x="443" y="454.386" width="2.7" height="8.8704" fill="#18b020" />
<rect x="517.85" y="460.854" width="5.4" height="13.6752" fill="#18b020" />
<rect x="595.4" y="463.071" width="5.4" height="51.9288" fill="#18b020" />
<path d="M443 462.702 L520.55 462.702 L598.1 475.083 L675.65 514.63" fill="none" stroke="#1616b0" stroke-width="1.7" stroke-linejoin="round"/>
<rect x="441.5" y="461.202" width="3" height="3" fill="#c01a30" />
<rect x="519.05" y="461.202" width="3" height="3" fill="#c01a30" />
<rect x="596.6" y="473.583" width="3" height="3" fill="#c01a30" />
<rect x="674.15" y="513.13" width="3" height="3" fill="#c01a30" />
<path d="M143.1 536V299q0-2 2-2H416.3q2 0 2 2V536z" fill="#0a2fc0"/>
<path d="M143.1 318.6V299q0-2 2-2H416.3q2 0 2 2V318.6z" fill="url(#gA2)"/>
<rect x="146.4" y="318.6" width="269.4" height="214.9" fill="#fff" />
<rect x="401.9" y="302.6" width="12.4" height="14" rx="1.5" fill="url(#gC)" stroke="#dfe9ff" stroke-width="0.7"/>
<path d="M404.9 306.4L411.3 312.8M411.3 306.4L404.9 312.8" stroke="#fff" stroke-width="1.5" fill="none"/>
<rect x="387.7" y="302.6" width="12.4" height="14" rx="1.5" fill="url(#gB)" stroke="#dfe9ff" stroke-width="0.7"/>
<rect x="390.7" y="305.8" width="6.4" height="7.8" fill="none" stroke="#fff" stroke-width="1"/>
<rect x="390.2" y="305.3" width="7.4" height="1.6" fill="#fff" />
<rect x="373.5" y="302.6" width="12.4" height="14" rx="1.5" fill="url(#gB)" stroke="#dfe9ff" stroke-width="0.7"/>
<rect x="376" y="312.1" width="5.58" height="2" fill="#fff" />
<rect x="146.7" y="305.3" width="7.2" height="7.6" fill="#eef0f8" stroke="#9aa2d0" stroke-width="0.6"/>
<path d="M147.5 311.9l1.8-4l3.6-1.6" fill="none" stroke="#c06a80" stroke-width="1.1"/>
<text y="313.5" font-size="10.4" fill="#fff" font-weight="bold" ><tspan x="157.3" textLength="43.9" lengthAdjust="spacingAndGlyphs">COMFORT</tspan> <tspan x="207.2" textLength="2.9" lengthAdjust="spacingAndGlyphs">-</tspan> <tspan x="214" textLength="27.5" lengthAdjust="spacingAndGlyphs">[Gain]</tspan></text>
<line x1="166.3" y1="515" x2="402.3" y2="515" stroke="#3e3e3e" stroke-width="1.1" />
<text x="163.1" y="517.9" font-size="8" fill="#222" font-weight="normal" font-style="normal" text-anchor="end" >0</text>
<line x1="166.3" y1="496.52" x2="402.3" y2="496.52" stroke="#3e3e3e" stroke-width="1.1" />
<text x="163.1" y="499.42" font-size="8" fill="#222" font-weight="normal" font-style="normal" text-anchor="end" textLength="9.4" lengthAdjust="spacingAndGlyphs" >0.1</text>
<line x1="166.3" y1="478.04" x2="402.3" y2="478.04" stroke="#3e3e3e" stroke-width="1.1" />
<text x="163.1" y="480.94" font-size="8" fill="#222" font-weight="normal" font-style="normal" text-anchor="end" textLength="9.4" lengthAdjust="spacingAndGlyphs" >0.2</text>
<line x1="166.3" y1="459.56" x2="402.3" y2="459.56" stroke="#3e3e3e" stroke-width="1.1" />
<text x="163.1" y="462.46" font-size="8" fill="#222" font-weight="normal" font-style="normal" text-anchor="end" textLength="9.4" lengthAdjust="spacingAndGlyphs" >0.3</text>
<line x1="166.3" y1="441.08" x2="402.3" y2="441.08" stroke="#3e3e3e" stroke-width="1.1" />
<text x="163.1" y="443.98" font-size="8" fill="#222" font-weight="normal" font-style="normal" text-anchor="end" textLength="9.4" lengthAdjust="spacingAndGlyphs" >0.4</text>
<line x1="166.3" y1="422.6" x2="402.3" y2="422.6" stroke="#3e3e3e" stroke-width="1.1" />
<text x="163.1" y="425.5" font-size="8" fill="#222" font-weight="normal" font-style="normal" text-anchor="end" textLength="9.4" lengthAdjust="spacingAndGlyphs" >0.5</text>
<line x1="166.3" y1="404.12" x2="402.3" y2="404.12" stroke="#3e3e3e" stroke-width="1.1" />
<text x="163.1" y="407.02" font-size="8" fill="#222" font-weight="normal" font-style="normal" text-anchor="end" textLength="9.4" lengthAdjust="spacingAndGlyphs" >0.6</text>
<line x1="166.3" y1="385.64" x2="402.3" y2="385.64" stroke="#3e3e3e" stroke-width="1.1" />
<text x="163.1" y="388.54" font-size="8" fill="#222" font-weight="normal" font-style="normal" text-anchor="end" textLength="9.4" lengthAdjust="spacingAndGlyphs" >0.7</text>
<line x1="166.3" y1="367.16" x2="402.3" y2="367.16" stroke="#3e3e3e" stroke-width="1.1" />
<text x="163.1" y="370.06" font-size="8" fill="#222" font-weight="normal" font-style="normal" text-anchor="end" textLength="9.4" lengthAdjust="spacingAndGlyphs" >0.8</text>
<line x1="166.3" y1="348.68" x2="402.3" y2="348.68" stroke="#3e3e3e" stroke-width="1.1" />
<text x="163.1" y="351.58" font-size="8" fill="#222" font-weight="normal" font-style="normal" text-anchor="end" textLength="9.4" lengthAdjust="spacingAndGlyphs" >0.9</text>
<line x1="166.3" y1="330.2" x2="402.3" y2="330.2" stroke="#3e3e3e" stroke-width="1.1" />
<text x="163.1" y="333.1" font-size="8" fill="#222" font-weight="normal" font-style="normal" text-anchor="end" >1</text>
<line x1="168.3" y1="322.6" x2="168.3" y2="517.2" stroke="#3e3e3e" stroke-width="1.1" />
<text x="168.3" y="525.8" font-size="7.9" fill="#222" font-weight="normal" font-style="normal" text-anchor="middle" textLength="15.8" lengthAdjust="spacingAndGlyphs" >0.000</text>
<line x1="246.3" y1="322.6" x2="246.3" y2="517.2" stroke="#3e3e3e" stroke-width="1.1" />
<text x="246.3" y="525.8" font-size="7.9" fill="#222" font-weight="normal" font-style="normal" text-anchor="middle" textLength="15.8" lengthAdjust="spacingAndGlyphs" >1.000</text>
<line x1="324.3" y1="322.6" x2="324.3" y2="517.2" stroke="#3e3e3e" stroke-width="1.1" />
<text x="324.3" y="525.8" font-size="7.9" fill="#222" font-weight="normal" font-style="normal" text-anchor="middle" textLength="15.8" lengthAdjust="spacingAndGlyphs" >2.000</text>
<line x1="402.3" y1="322.6" x2="402.3" y2="517.2" stroke="#3e3e3e" stroke-width="1.1" />
<text x="402.3" y="525.8" font-size="7.9" fill="#222" font-weight="normal" font-style="normal" text-anchor="middle" textLength="15.8" lengthAdjust="spacingAndGlyphs" >3.000</text>
<line x1="168.3" y1="322.6" x2="402.3" y2="322.6" stroke="#3e3e3e" stroke-width="1.1" />
<rect x="243.6" y="482.29" width="5.4" height="31.7856" fill="#18b020" />
<rect x="321.6" y="444.776" width="5.4" height="58.212" fill="#18b020" />
<rect x="399.6" y="443.852" width="3.9" height="36.96" fill="#18b020" />
<path d="M168.3 514.63 L246.3 503.912 L324.3 481.736 L402.3 444.222" fill="none" stroke="#1616b0" stroke-width="1.7" stroke-linejoin="round"/>
<rect x="166.8" y="513.13" width="3" height="3" fill="#c01a30" />
<rect x="244.8" y="502.412" width="3" height="3" fill="#c01a30" />
<rect x="322.8" y="480.236" width="3" height="3" fill="#c01a30" />
<rect x="400.8" y="442.722" width="3" height="3" fill="#c01a30" />
<rect x="415.9" y="300" width="2.6" height="236" fill="#0a2fc0" />
<rect x="691.8" y="19" width="28.2" height="521" fill="#f6f6f8" />
<rect x="0" y="536.8" width="720" height="3.2" fill="#f6f6f8" />
<text x="699.2" y="533.8" font-size="12.2" fill="#000" font-weight="normal" font-style="normal" text-anchor="start" textLength="12.8" lengthAdjust="spacingAndGlyphs" >33</text>
</svg>
</body></html>
